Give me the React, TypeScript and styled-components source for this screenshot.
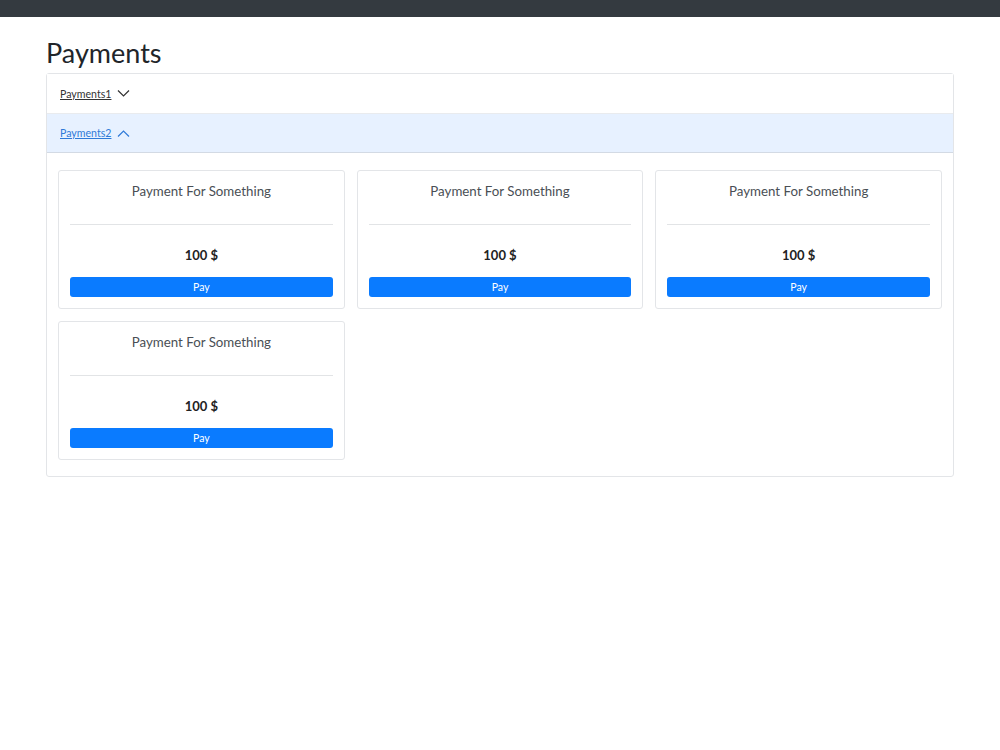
import styled, { createGlobalStyle } from "styled-components"

const GlobalStyle = createGlobalStyle`
  body {
    margin: 0;
    font-family: "Source Sans Pro", "Lato", "Noto Sans", sans-serif;
    color: #212529;
    background: #ffffff;
  }
`

const TopBar = styled.div`
  height: 17px;
  background-color: #343a40;
`

const Page = styled.main`
  padding: 18px 46px 0 46px;
`

const Title = styled.h1`
  margin: 0 0 2px 0;
  font-size: 27px;
  font-weight: 400;
  line-height: 36px;
  color: #212529;
`

const Accordion = styled.div`
  border: 1px solid #e3e5e8;
  border-radius: 3px;
`

const AccordionHeader = styled.div<{ $open?: boolean }>`
  display: flex;
  align-items: center;
  gap: 6px;
  height: ${(props) => (props.$open ? "38px" : "39px")};
  padding: 0 13px;
  background-color: ${(props) => (props.$open ? "#e7f1ff" : "#ffffff")};
  border-bottom: 1px solid ${(props) => (props.$open ? "#d3dae4" : "#e9ebee")};
`

const HeaderLink = styled.a<{ $open?: boolean }>`
  font-size: 10.6px;
  color: ${(props) => (props.$open ? "#2f7ad8" : "#333333")};
  text-decoration: underline;
  cursor: pointer;
`

const Chevron = styled.svg<{ $open?: boolean }>`
  width: 13px;
  height: 9px;
  stroke: ${(props) => (props.$open ? "#2f7ad8" : "#333333")};
  fill: none;
  stroke-width: 1.2;
`

const AccordionBody = styled.div`
  display: grid;
  grid-template-columns: repeat(3, 1fr);
  gap: 12px;
  padding: 17px 11px 16px 11px;
`

const Card = styled.div`
  display: flex;
  flex-direction: column;
  border: 1px solid #e3e5e8;
  border-radius: 3px;
  padding: 10px 11px 11px 11px;
  height: 139px;
  box-sizing: border-box;
`

const CardTitle = styled.div`
  text-align: center;
  font-size: 13.3px;
  color: #4a4f55;
  line-height: 20px;
`

const Divider = styled.hr`
  margin: 23px 0 0 0;
  border: 0;
  border-top: 1px solid #e2e4e6;
`

const Price = styled.div`
  margin-top: 21px;
  text-align: center;
  font-size: 13px;
  font-weight: 700;
  color: #222222;
  line-height: 18px;
`

const PayButton = styled.button`
  margin-top: 13px;
  height: 20px;
  padding: 0;
  border: 0;
  border-radius: 3px;
  background-color: #0a7bff;
  color: #ffffff;
  font-family: inherit;
  font-size: 10.5px;
  cursor: pointer;
`

const ChevronIcon = ({ open }: { open?: boolean }) => (
  <Chevron $open={open} viewBox="0 0 13 9">
    {open ? <polyline points="1,7.5 6.5,2 12,7.5" /> : <polyline points="1,1.5 6.5,7 12,1.5" />}
  </Chevron>
)

const payments = [1, 2, 3, 4].map((id) => ({ id, title: "Payment For Something", amount: 100 }))

const App = () => {
  return (
    <>
      <GlobalStyle />
      <TopBar />
      <Page>
        <Title>Payments</Title>
        <Accordion>
          <AccordionHeader>
            <HeaderLink>Payments1</HeaderLink>
            <ChevronIcon />
          </AccordionHeader>
          <AccordionHeader $open>
            <HeaderLink $open>Payments2</HeaderLink>
            <ChevronIcon open />
          </AccordionHeader>
          <AccordionBody>
            {payments.map((payment) => (
              <Card key={`payment-${payment.id}`}>
                <CardTitle>{payment.title}</CardTitle>
                <Divider />
                <Price>{payment.amount} $</Price>
                <PayButton>Pay</PayButton>
              </Card>
            ))}
          </AccordionBody>
        </Accordion>
      </Page>
    </>
  )
}

export default App
